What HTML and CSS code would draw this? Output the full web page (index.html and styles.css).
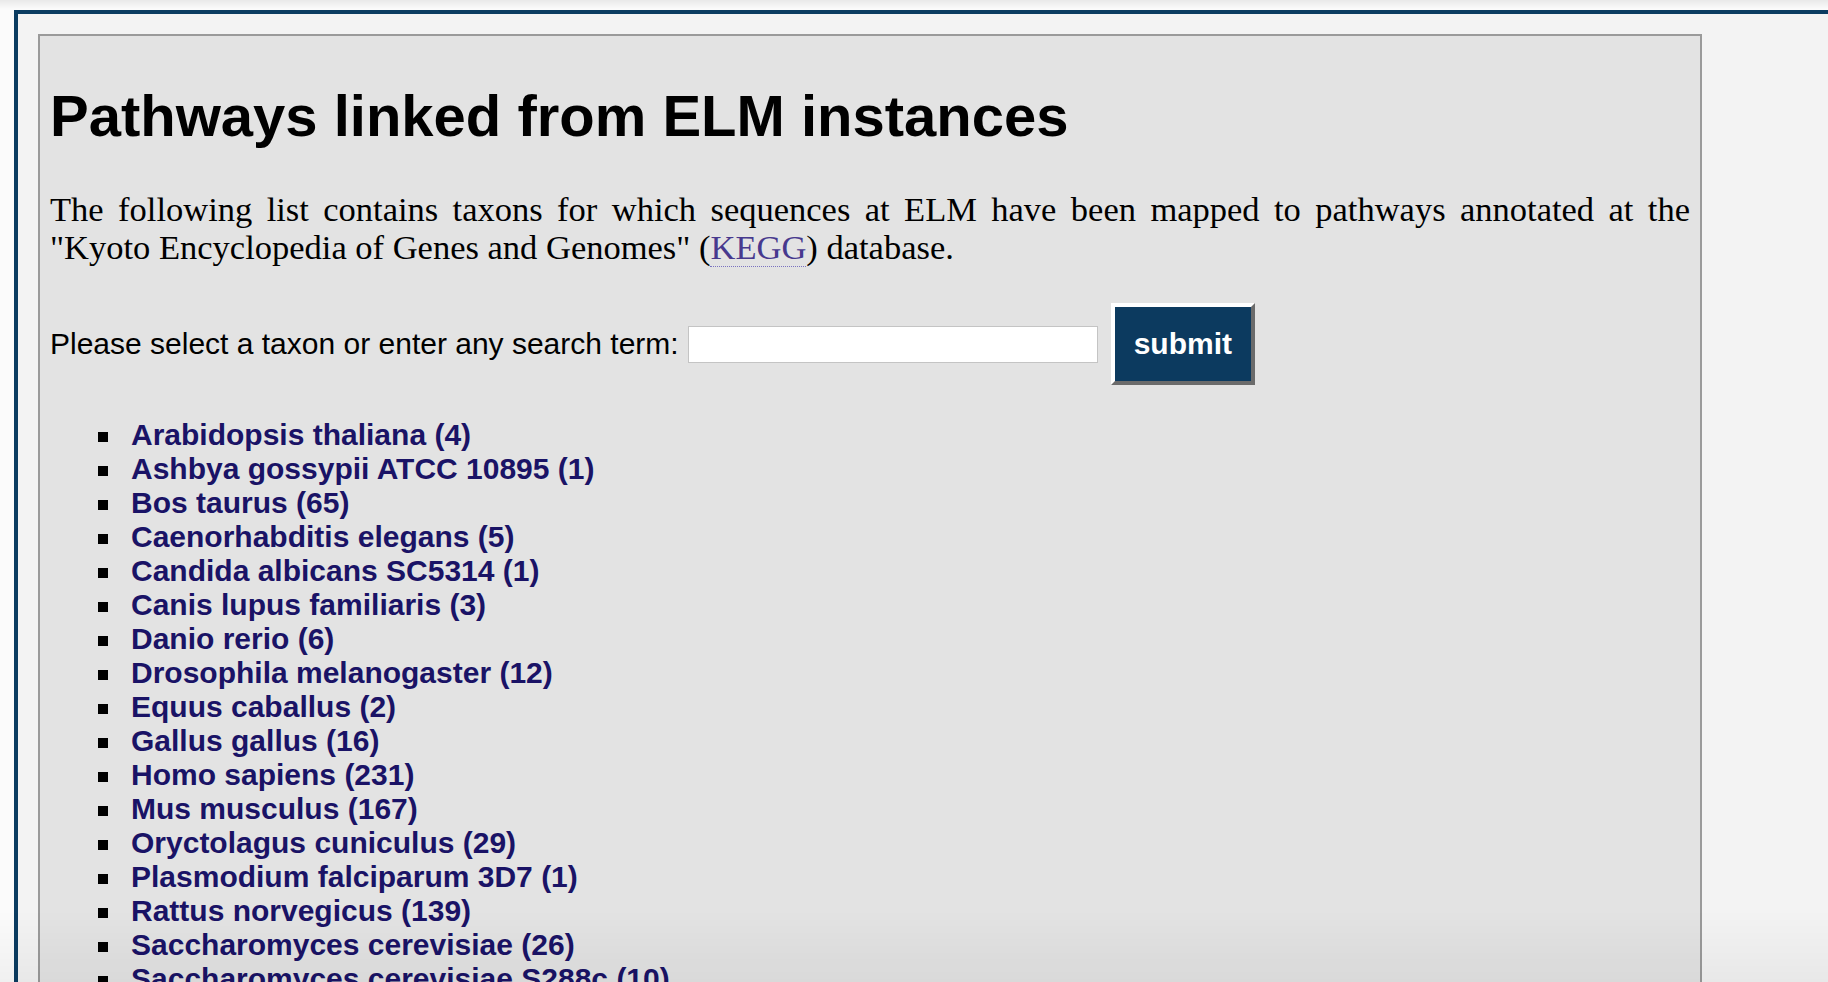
FILE: index.html
```html
<!DOCTYPE html>
<html lang="en">
<head>
<meta charset="utf-8">
<title>Pathways linked from ELM instances</title>
<link rel="stylesheet" href="styles.css">
</head>
<body>
<div class="frame">
  <div class="panel">
    <h1 class="title">Pathways linked from ELM instances</h1>
    <p class="intro">The following list contains taxons for which sequences at ELM have been mapped to pathways annotated at the "Kyoto Encyclopedia of Genes and Genomes" (<a class="abbr-link" href="#">KEGG</a>) database.</p>
    <form class="search">
      <label class="search-label" for="q">Please select a taxon or enter any search term:</label>
      <input id="q" class="search-input" type="text">
      <button class="submit" type="button">submit</button>
    </form>
    <ul class="taxa">
      <li class="taxon"><a class="taxon-link" href="#">Arabidopsis thaliana (4)</a></li>
      <li class="taxon"><a class="taxon-link" href="#">Ashbya gossypii ATCC 10895 (1)</a></li>
      <li class="taxon"><a class="taxon-link" href="#">Bos taurus (65)</a></li>
      <li class="taxon"><a class="taxon-link" href="#">Caenorhabditis elegans (5)</a></li>
      <li class="taxon"><a class="taxon-link" href="#">Candida albicans SC5314 (1)</a></li>
      <li class="taxon"><a class="taxon-link" href="#">Canis lupus familiaris (3)</a></li>
      <li class="taxon"><a class="taxon-link" href="#">Danio rerio (6)</a></li>
      <li class="taxon"><a class="taxon-link" href="#">Drosophila melanogaster (12)</a></li>
      <li class="taxon"><a class="taxon-link" href="#">Equus caballus (2)</a></li>
      <li class="taxon"><a class="taxon-link" href="#">Gallus gallus (16)</a></li>
      <li class="taxon"><a class="taxon-link" href="#">Homo sapiens (231)</a></li>
      <li class="taxon"><a class="taxon-link" href="#">Mus musculus (167)</a></li>
      <li class="taxon"><a class="taxon-link" href="#">Oryctolagus cuniculus (29)</a></li>
      <li class="taxon"><a class="taxon-link" href="#">Plasmodium falciparum 3D7 (1)</a></li>
      <li class="taxon"><a class="taxon-link" href="#">Rattus norvegicus (139)</a></li>
      <li class="taxon"><a class="taxon-link" href="#">Saccharomyces cerevisiae (26)</a></li>
      <li class="taxon"><a class="taxon-link" href="#">Saccharomyces cerevisiae S288c (10)</a></li>
    </ul>
  </div>
</div>
<div class="bottom-shade"></div>
</body>
</html>
```

FILE: styles.css
```css
html, body {
  height: 100%;
  overflow: hidden;
}

body {
  margin: 0;
  background: linear-gradient(to bottom, #e9e9e9 0, #fbfbfb 9px, #fbfbfb 100%);
  font-family: "Liberation Sans", Arial, Helvetica, sans-serif;
  color: #000;
}

.frame {
  margin: 10px 0 0 14px;
  min-height: 100%;
  box-sizing: border-box;
  border-top: 4px solid #0b3c61;
  border-left: 4px solid #0b3c61;
  background: #f3f3f3;
  padding: 20px 0 0 20px;
}

.panel {
  width: 1664px;
  box-sizing: border-box;
  background: #e3e3e3;
  border: 2px solid #9a9a9a;
  padding: 47px 10px 40px 10px;
}

.title {
  margin: 0;
  font-size: 58px;
  line-height: 66px;
  font-weight: bold;
}

.intro {
  margin: 41px 0 0 0;
  font-family: "Liberation Serif", "Times New Roman", serif;
  font-size: 34.5px;
  line-height: 38px;
  text-align: justify;
}

.abbr-link {
  color: #47398e;
  text-decoration: none;
  border-bottom: 1px dotted #7a72c0;
}

.search {
  margin: 37px 0 0 0;
  display: flex;
  align-items: center;
}

.search-label {
  font-size: 30px;
  line-height: 34px;
}

.search-input {
  margin: 0 13px 0 9px;
  width: 410px;
  height: 37px;
  box-sizing: border-box;
  border: 1px solid #c4c4c4;
  background: #fff;
  padding: 0 4px;
  font-size: 20px;
}

.submit {
  height: 82px;
  box-sizing: border-box;
  padding: 0 19px;
  border: 4px solid;
  border-color: #ffffff #6b6b6b #6b6b6b #ffffff;
  background: #0c3a5f;
  color: #fff;
  font-family: "Liberation Sans", Arial, Helvetica, sans-serif;
  font-size: 30px;
  font-weight: bold;
  line-height: 34px;
}

.taxa {
  margin: 33px 0 0 0;
  padding: 0 0 0 48px;
  list-style: none;
}

.taxon {
  display: flex;
  align-items: center;
  font-size: 30px;
  line-height: 34px;
  font-weight: bold;
}

.taxon::before {
  content: "";
  flex: none;
  width: 10px;
  height: 10px;
  margin: 3px 23px 0 0;
  background: #000;
}

.taxon-link {
  color: #1a1366;
  text-decoration: none;
}

.bottom-shade {
  position: fixed;
  left: 0;
  right: 0;
  bottom: 0;
  height: 72px;
  pointer-events: none;
  background: linear-gradient(to bottom, rgba(0, 0, 0, 0) 0, rgba(0, 0, 0, 0.045) 100%);
}
```
